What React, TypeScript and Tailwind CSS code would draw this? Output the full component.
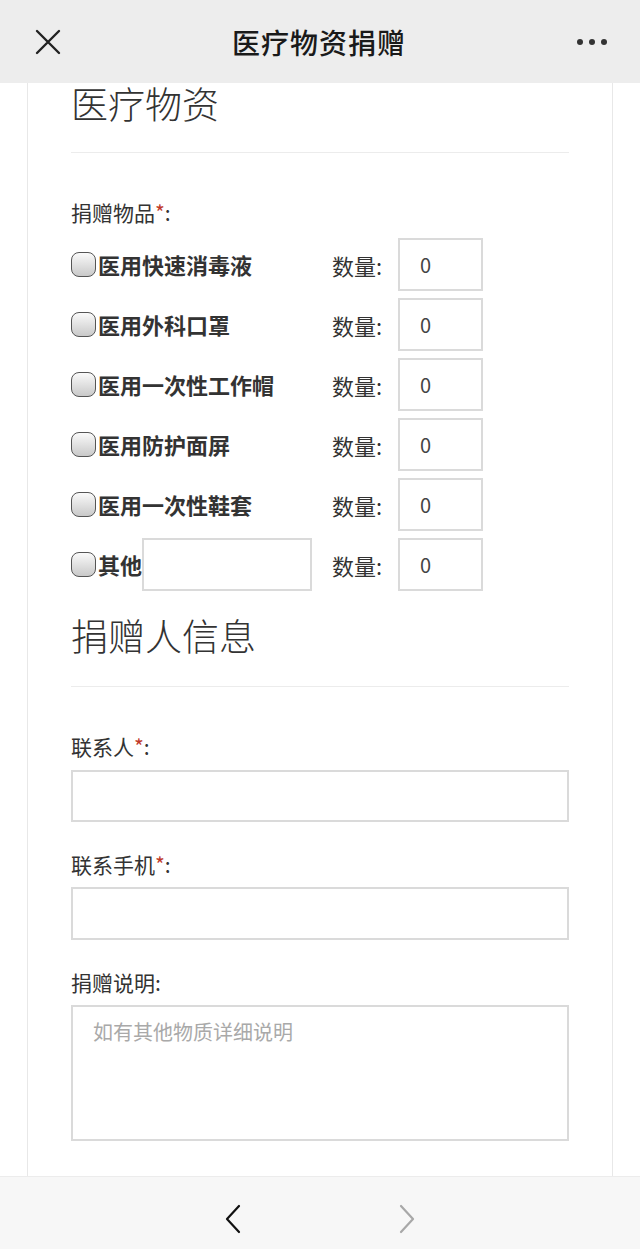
import React from "react";

const items = [
  "医用快速消毒液",
  "医用外科口罩",
  "医用一次性工作帽",
  "医用防护面屏",
  "医用一次性鞋套",
];

const font = { fontFamily: '"Noto Sans CJK SC", "Noto Sans", sans-serif' };

function Checkbox() {
  return (
    <span className="w-[25px] h-[25px] shrink-0 rounded-[8px] border-[1.5px] border-[#555] bg-linear-to-b from-[#fafafa] to-[#c9c9c9]" />
  );
}

function QtyBox() {
  return (
    <div className="flex items-center">
      <span className="w-[66px] text-[22px] leading-[28px] text-[#333]">数量:</span>
      <div className="w-[85px] h-[53px] border-2 border-[#dadada] flex items-center pl-[20px] text-[20px] text-[#444]">
        0
      </div>
    </div>
  );
}

function Label({ text, required }: { text: string; required?: boolean }) {
  return (
    <div className="text-[21px] leading-[28px] text-[#333]">
      {text}
      {required && <span className="text-[#c0392b]">*</span>}:
    </div>
  );
}

export default function App() {
  return (
    <div className="w-full h-[1249px] flex flex-col overflow-hidden bg-white" style={font}>
      {/* top nav bar */}
      <div className="h-[83px] shrink-0 bg-[#ededed] flex items-center justify-between px-[35px]">
        <svg width="26" height="26" viewBox="0 0 26 26" fill="none" stroke="#222" strokeWidth="2.4" strokeLinecap="round">
          <path d="M2 2L24 24M24 2L2 24" />
        </svg>
        <div className="text-[28px] font-medium text-[#1a1a1a] tracking-[1px]">医疗物资捐赠</div>
        <div className="flex gap-[6px] mr-[-2px]">
          <span className="w-[6px] h-[6px] rounded-full bg-[#333]" />
          <span className="w-[6px] h-[6px] rounded-full bg-[#333]" />
          <span className="w-[6px] h-[6px] rounded-full bg-[#333]" />
        </div>
      </div>

      {/* page content */}
      <div className="flex-1 min-h-0">
        <div className="mx-[27px] h-full border-x border-[#e8e8e8] px-[43px]">
          <h2 className="text-[37px] leading-[40px] font-light text-[#333]">医疗物资</h2>
          <div className="mt-[29px] border-t border-[#ececec]" />

          <div className="mt-[45px]">
            <Label text="捐赠物品" required />
          </div>

          <div className="mt-[12px] flex flex-col gap-[7px]">
            {items.map((name) => (
              <div key={name} className="flex items-center">
                <div className="w-[261px] flex items-center">
                  <Checkbox />
                  <span className="ml-[2px] text-[22px] font-bold text-[#333]">{name}</span>
                </div>
                <QtyBox />
              </div>
            ))}
            <div className="flex items-center">
              <div className="w-[261px] flex items-center">
                <Checkbox />
                <span className="ml-[2px] text-[22px] font-bold text-[#333]">其他</span>
                <div className="w-[170px] h-[53px] border-2 border-[#dadada]" />
              </div>
              <QtyBox />
            </div>
          </div>

          <h2 className="mt-[22px] text-[37px] leading-[44px] font-light text-[#333]">捐赠人信息</h2>
          <div className="mt-[29px] border-t border-[#ececec]" />

          <div className="mt-[45px]">
            <Label text="联系人" required />
          </div>
          <div className="mt-[10px] h-[52px] border-2 border-[#dadada]" />

          <div className="mt-[28px]">
            <Label text="联系手机" required />
          </div>
          <div className="mt-[9px] h-[53px] border-2 border-[#dadada]" />

          <div className="mt-[28px]">
            <Label text="捐赠说明" />
          </div>
          <div className="mt-[9px] h-[136px] border-2 border-[#dadada] pl-[20px] pt-[11px] text-[20px] leading-[28px] text-[#a9a9a9]">
            如有其他物质详细说明
          </div>
        </div>
      </div>

      {/* bottom toolbar */}
      <div className="h-[73px] shrink-0 bg-[#f7f7f7] border-t border-[#ececec] flex items-center justify-center gap-[156px] pt-[12px]">
        <svg width="18" height="30" viewBox="0 0 18 30" fill="none" stroke="#111" strokeWidth="2.2" strokeLinecap="round" strokeLinejoin="round">
          <path d="M15 2L3 15L15 28" />
        </svg>
        <svg width="18" height="30" viewBox="0 0 18 30" fill="none" stroke="#a8a8a8" strokeWidth="2.2" strokeLinecap="round" strokeLinejoin="round">
          <path d="M3 2L15 15L3 28" />
        </svg>
      </div>
    </div>
  );
}
